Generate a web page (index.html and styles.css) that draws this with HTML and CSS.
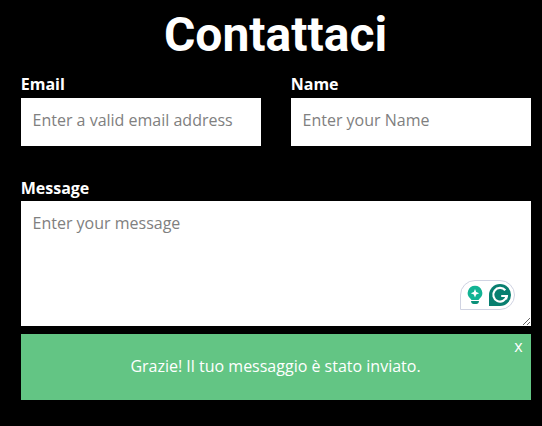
FILE: index.html
```html
<!DOCTYPE html>
<html lang="it">
<head>
<meta charset="utf-8">
<title>Contattaci</title>
<link rel="stylesheet" href="styles.css">
</head>
<body>
<main class="contact">
  <h1 class="title">Contattaci</h1>
  <form class="form">
    <div class="row">
      <div class="field"><label class="label" for="email">Email</label><input class="control" id="email" type="email" placeholder="Enter a valid email address"></div>
      <div class="field"><label class="label" for="name">Name</label><input class="control" id="name" type="text" placeholder="Enter your Name"></div>
    </div>
    <div class="field message">
      <label class="label" for="message">Message</label>
      <textarea class="control area" id="message" placeholder="Enter your message"></textarea>
      <div class="assistant">
        <svg class="icon" viewBox="0 0 22 22">
          <path d="M11 1.800a7.200 7.200 0 0 0-4.700 12.700l1.200 1.500h7l1.200-1.500A7.200 7.200 0 0 0 11 1.800z" fill="#12b394"/>
          <path d="M11 5 12.200 7.900 15.200 9.200l-3 1.200L11 13.400l-1.200-3L6.800 9.200l3-1.300z" fill="#fff"/>
          <path d="M7 17h8q-.2 3-2.700 3H9.700Q7.200 20 7 17z" fill="#099079"/>
        </svg>
        <svg class="icon" viewBox="0 0 22 22">
          <path d="M11 0a11 11 0 0 1 0 22H0V11A11 11 0 0 1 11 0z" fill="#087f70"/>
          <path d="M16.300 6.300A6.800 6.800 0 1 0 17.800 12H12.200" fill="none" stroke="#fff" stroke-width="2.200"/>
          <path d="M14 11h5l-1 5z" fill="#fff"/>
        </svg>
      </div>
    </div>
    <div class="notice"><span class="text">Grazie! Il tuo messaggio è stato inviato.</span><span class="close">x</span></div>
  </form>
</main>
</body>
</html>
```
FILE: styles.css
```css
* { box-sizing: border-box; }
body { margin: 0; background: #000; color: #fff; font: 16px/24px "Open Sans", sans-serif; }
.contact { padding: 8px 11px 0 21px; }
.title { margin: 0; padding-right: 1px; font: 700 48px/53px Roboto, sans-serif; text-align: center; }
.form { padding-top: 11px; }
.row { display: grid; grid-template-columns: 240px 240px; gap: 30px; }
.label { display: block; margin-left: -0.3px; font-weight: 700; }
.control { display: block; width: 100%; height: 48px; margin: 2px 0 0; padding: 8px 11.5px 12px; border: 0; border-radius: 0; background: #fff; color: #404040; font: 16px/24px "Open Sans", sans-serif; }
.control::placeholder { color: #808080; opacity: 1; }
.message { position: relative; margin-top: 30px; }
.area { height: 125px; margin-top: 1px; padding-top: 10px; resize: vertical; }
.assistant { position: absolute; right: 16px; bottom: 16px; display: flex; gap: 3px; align-items: center; width: 55px; height: 30px; padding: 0 3px; border: 1px solid #d0d3e2; border-radius: 15px 15px 15px 0; background: #fff; }
.icon { width: 22px; height: 22px; }
.notice { position: relative; display: flex; align-items: center; justify-content: center; height: 66px; margin-top: 8px; padding: 0 1px 2px 0; background: #63c584; }
.close { position: absolute; top: 0; right: 8.5px; }
```
